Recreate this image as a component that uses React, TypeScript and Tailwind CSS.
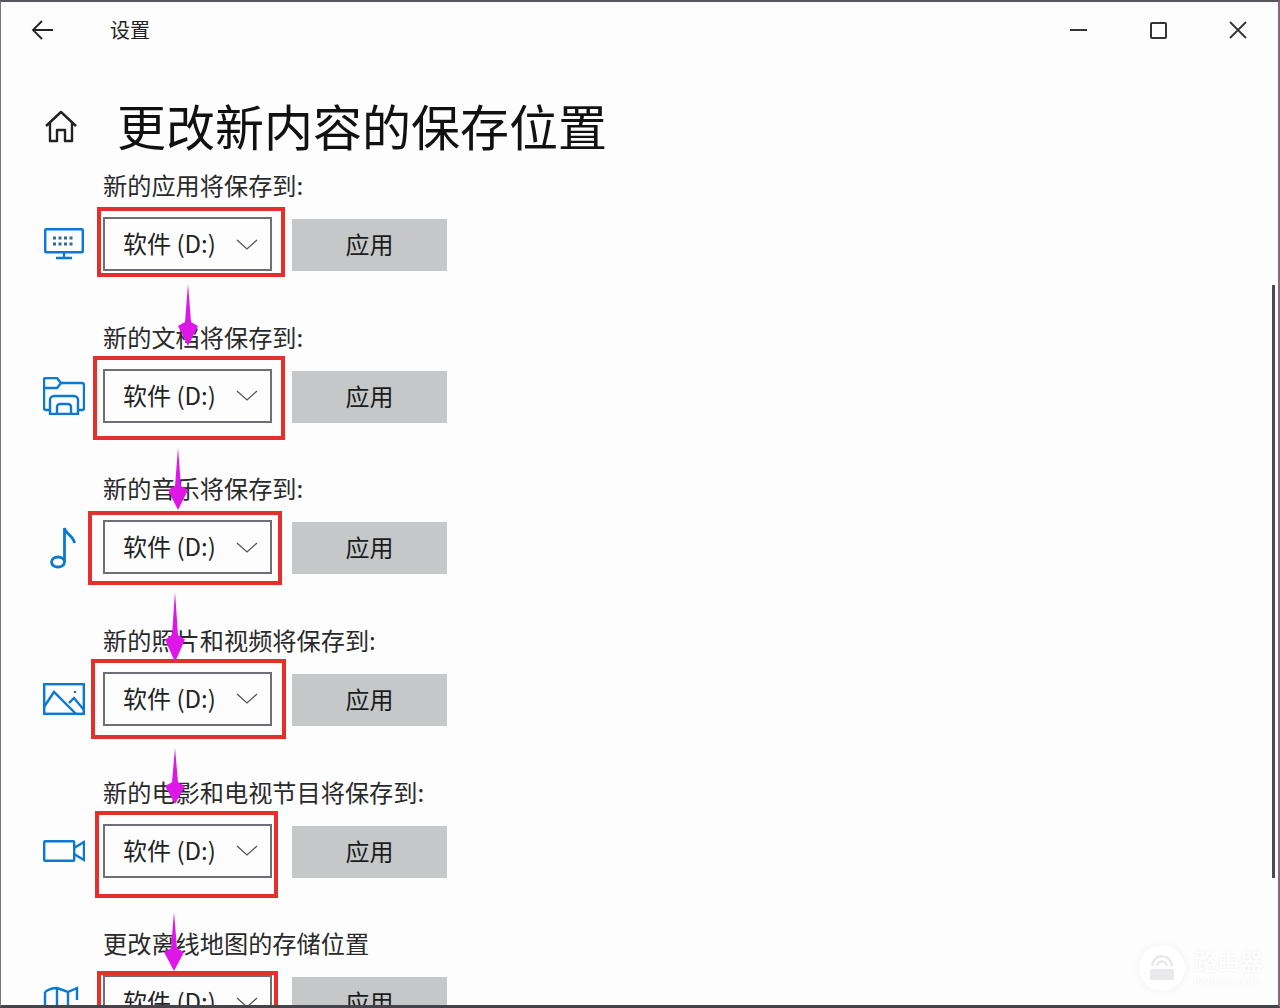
import type { ReactNode } from "react";

function DesktopIcon() {
  return (
    <svg width="40" height="32" viewBox="0 0 40 32" fill="none" stroke="#0a78d4" strokeWidth="2.4">
      <rect x="1.200" y="1.200" width="37.600" height="23" rx="1" />
      <path d="M20 24v5M12 30h16" />
      <path d="M9 10h22M9 16h22" strokeWidth="3" strokeDasharray="3 2.500" stroke="#2f6b9c" />
    </svg>
  );
}

function FolderIcon() {
  return (
    <svg width="42" height="38" viewBox="0 0 42 38" fill="none" stroke="#0a78d4" strokeWidth="2.400">
      <path d="M6 33H3a2 2 0 0 1-2-2V3a2 2 0 0 1 2-2h11l4 5h21a2 2 0 0 1 2 2v23a2 2 0 0 1-2 2h-3" />
      <path d="M1 11h13l4-5" />
      <path d="M7 37V23a4 4 0 0 1 4-4h20a4 4 0 0 1 4 4v14z" />
      <path d="M14 37v-7a3 3 0 0 1 3-3h8a3 3 0 0 1 3 3v7" />
    </svg>
  );
}

function MusicIcon() {
  return (
    <svg width="42" height="44" viewBox="0 0 42 44" fill="none" stroke="#0a78d4" strokeWidth="2.800">
      <ellipse cx="15" cy="37" rx="6.500" ry="5" />
      <path d="M21.500 37V3c1 6 9 8 10 15" />
    </svg>
  );
}

function PhotoIcon() {
  return (
    <svg width="42" height="32" viewBox="0 0 42 32" fill="none" stroke="#0a78d4" strokeWidth="2.400">
      <rect x="1.200" y="1.200" width="39.600" height="29.600" />
      <path d="M1 24 11 9l22 22M26 20l5-5 10 12" />
      <circle cx="32" cy="9" r="1.300" fill="#3d6f99" stroke="none" />
    </svg>
  );
}

function VideoIcon() {
  return (
    <svg width="42" height="22" viewBox="0 0 42 22" fill="none" stroke="#0a78d4" strokeWidth="2.400">
      <rect x="1.200" y="1.200" width="30" height="19.600" rx="1" />
      <path d="m31 8 10-6v18L31 14" />
    </svg>
  );
}

function MapIcon() {
  return (
    <svg width="42" height="32" viewBox="0 0 42 32" fill="none" stroke="#0a78d4" strokeWidth="2.400">
      <path d="M2 6c4-3 8-4 12-4l11 4 9-4v12M2 6v26M14 2v26M25 6v26M36 20v3" />
    </svg>
  );
}

function Chevron() {
  return (
    <svg width="22" height="11" viewBox="0 0 22 11" fill="none" stroke="#555" strokeWidth="1.300">
      <path d="m1 1 10 9 10-9" />
    </svg>
  );
}

function StorageRow({ label, icon }: { label: string; icon: ReactNode }) {
  return (
    <section className="h-[151.67px] shrink-0">
      <p className="pl-[102px] text-[24.2px] leading-[30px] text-[#2a2a2a]">{label}</p>
      <div className="mt-[17px] flex items-end">
        <div className="flex h-[54px] w-[102px] items-center justify-center pl-[24px]">{icon}</div>
        <div className="flex h-[54px] w-[169px] items-center justify-between border-2 border-[#6f6e76] pl-[18px] pr-[12px] text-[24px] text-[#222]">
          <span className="pb-[2px]">软件 (D:)</span>
          <Chevron />
        </div>
        <button className="ml-[20px] h-[52px] w-[155px] bg-[#c6c7c9] pb-[2px] text-[24px] text-[#1c1c1c]">应用</button>
      </div>
    </section>
  );
}

function RedBox({ className }: { className: string }) {
  return <div className={`absolute border-[4px] border-[#e3302b] ${className}`} />;
}

// Magenta annotation arrow, long thin shaft with a diamond head
function Arrow({ className }: { className: string }) {
  return (
    <svg className={`absolute ${className}`} width="24" height="62" viewBox="0 0 24 62" preserveAspectRatio="none">
      <path d="M12 0 15 38 22 42 12 62 2 42 9 38z" fill="#de16e8" />
    </svg>
  );
}

export default function App() {
  return (
    <div className="relative h-[1008px] w-[1280px] overflow-hidden border-t-2 border-r-2 border-b-[3px] border-l border-t-[#55555a] border-r-[#7b6d7a] border-b-[#44444a] border-l-[#77777d] bg-[#fdfdfe] font-['Noto_Sans_CJK_SC',sans-serif]">
      <header className="flex h-[56px] items-center justify-between">
        <div className="flex items-center">
          <svg className="ml-[30px]" width="24" height="20" viewBox="0 0 24 20" fill="none" stroke="#222" strokeWidth="1.800">
            <path d="M22 10H2M11 1l-9 9 9 9" />
          </svg>
          <span className="ml-[55px] text-[20px] text-[#222]">设置</span>
        </div>
        <div className="flex items-center">
          <div className="flex w-[80px] justify-center">
            <div className="h-[2px] w-[17px] bg-[#333]" />
          </div>
          <div className="flex w-[80px] justify-center">
            <div className="h-[17px] w-[17px] rounded-[2px] border-2 border-[#333]" />
          </div>
          <div className="flex w-[80px] justify-center">
            <svg width="18" height="18" viewBox="0 0 18 18" stroke="#333" strokeWidth="1.800">
              <path d="m1 1 16 16M17 1 1 17" />
            </svg>
          </div>
        </div>
      </header>

      <div className="mt-[37px] flex h-[64px] items-center">
        <svg className="ml-[43px]" width="34" height="34" viewBox="0 0 34 34" fill="none" stroke="#222" strokeWidth="2.400">
          <path d="M2 16 17 2l15 14M6 13v18h7V20h8v11h7V13" strokeLinejoin="round" />
        </svg>
        <h1 className="mb-[4px] ml-[39px] text-[49px] leading-[64px] font-normal text-[#111]">更改新内容的保存位置</h1>
      </div>

      <main className="mt-[11px] flex flex-col">
        <StorageRow label="新的应用将保存到:" icon={<DesktopIcon />} />
        <StorageRow label="新的文档将保存到:" icon={<FolderIcon />} />
        <StorageRow label="新的音乐将保存到:" icon={<MusicIcon />} />
        <StorageRow label="新的照片和视频将保存到:" icon={<PhotoIcon />} />
        <StorageRow label="新的电影和电视节目将保存到:" icon={<VideoIcon />} />
        <StorageRow label="更改离线地图的存储位置" icon={<MapIcon />} />
      </main>

      {/* scrollbar thumb */}
      <div className="absolute top-[283px] right-[3px] h-[593px] w-[3px] bg-[#4d4763]" />

      {/* red annotation boxes */}
      <RedBox className="top-[205px] left-[96px] h-[70px] w-[188px]" />
      <RedBox className="top-[354px] left-[92px] h-[84px] w-[192px]" />
      <RedBox className="top-[509px] left-[87px] h-[74px] w-[194px]" />
      <RedBox className="top-[657px] left-[90px] h-[80px] w-[195px]" />
      <RedBox className="top-[809px] left-[94px] h-[87px] w-[183px]" />
      <RedBox className="top-[969px] left-[96px] h-[60px] w-[181px]" />

      {/* magenta arrows */}
      <Arrow className="top-[282px] left-[175px]" />
      <Arrow className="top-[446px] left-[165px]" />
      <Arrow className="top-[590px] left-[162px] h-[70px]" />
      <Arrow className="top-[746px] left-[162px] h-[56px]" />
      <Arrow className="top-[910px] left-[161px] h-[59px]" />

      {/* watermark */}
      <div className="absolute top-[943px] left-[1138px] flex items-center">
        <div className="flex h-[46px] w-[46px] items-center justify-center rounded-full bg-white shadow-[0_0_8px_rgba(0,0,0,0.05)]">
          <svg width="28" height="28" viewBox="0 0 28 28" fill="#e9e9ec">
            <rect x="2" y="15" width="24" height="11" rx="2" />
            <path d="M14 1a11 11 0 0 1 11 11h-2.500A8.500 8.500 0 0 0 14 3.500 8.500 8.500 0 0 0 5.500 12H3A11 11 0 0 1 14 1zm0 5a6 6 0 0 1 6 6h-2.500a3.500 3.500 0 0 0-7 0H8a6 6 0 0 1 6-6z" />
          </svg>
        </div>
        <div className="ml-[9px] flex flex-col gap-[2px] text-white [text-shadow:0_0_3px_rgba(0,0,0,0.07)]">
          <span className="text-[23px] leading-[25px]">路由器</span>
          <span className="font-['Liberation_Sans',sans-serif] text-[12.500px] leading-[13px]">luyouqi.com</span>
        </div>
      </div>
    </div>
  );
}
